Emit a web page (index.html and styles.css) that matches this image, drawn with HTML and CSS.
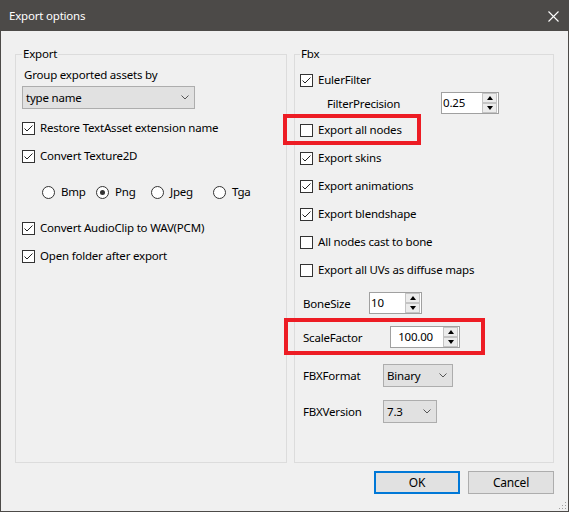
FILE: index.html
```html
<!DOCTYPE html>
<html lang="en">
<head>
  <meta charset="UTF-8" />
  <meta name="viewport" content="width=device-width, initial-scale=1" />
  <title>Export options</title>
  <link rel="stylesheet" href="styles.css">
</head>
<body>
  <div class="window">
    <div class="titlebar">
      <span class="title">Export options</span>
      <svg class="close" width="11" height="11" viewBox="0 0 11 11">
        <path d="M0.5 0.5 L10.5 10.5 M10.5 0.5 L0.5 10.5" stroke="#fff" stroke-width="1.1" fill="none" />
      </svg>
    </div>

    <div class="content">
      <div class="groups">
        <fieldset class="group group-export">
          <legend>Export</legend>
          <div class="caption">Group exported assets by</div>
          <div class="combo combo-group">
            <span>type name</span>
            <svg class="chevron" width="8" height="5" viewBox="0 0 8 5"><path d="M0.5 0.5 L4 4 L7.5 0.5" stroke="#555" fill="none" /></svg>
          </div>
          <div class="check row-first">
            <span class="box checked"><svg width="11" height="11" viewBox="0 0 11 11"><path d="M1.5 5.5 L4 8 L9.5 2.5" stroke="#222" fill="none" /></svg></span>
            <span>Restore TextAsset extension name</span>
          </div>
          <div class="check">
            <span class="box checked"><svg width="11" height="11" viewBox="0 0 11 11"><path d="M1.5 5.5 L4 8 L9.5 2.5" stroke="#222" fill="none" /></svg></span>
            <span>Convert Texture2D</span>
          </div>
          <div class="radios">
            <div class="radio radio-bmp"><span class="dot"></span>Bmp</div>
            <div class="radio radio-png"><span class="dot selected"></span>Png</div>
            <div class="radio radio-jpeg"><span class="dot"></span>Jpeg</div>
            <div class="radio"><span class="dot"></span>Tga</div>
          </div>
          <div class="check row-audio">
            <span class="box checked"><svg width="11" height="11" viewBox="0 0 11 11"><path d="M1.5 5.5 L4 8 L9.5 2.5" stroke="#222" fill="none" /></svg></span>
            <span>Convert AudioClip to WAV(PCM)</span>
          </div>
          <div class="check">
            <span class="box checked"><svg width="11" height="11" viewBox="0 0 11 11"><path d="M1.5 5.5 L4 8 L9.5 2.5" stroke="#222" fill="none" /></svg></span>
            <span>Open folder after export</span>
          </div>
        </fieldset>

        <fieldset class="group group-fbx">
          <legend>Fbx</legend>
          <div class="check row-euler">
            <span class="box checked"><svg width="11" height="11" viewBox="0 0 11 11"><path d="M1.5 5.5 L4 8 L9.5 2.5" stroke="#222" fill="none" /></svg></span>
            <span>EulerFilter</span>
          </div>
          <div class="field field-precision">
            <span class="field-label">FilterPrecision</span>
            <div class="spin-field spin-precision">
              <span class="value">0.25</span>
              <div class="spinner"><span class="up"></span><span class="down"></span></div>
            </div>
          </div>
          <div class="mark mark-nodes">
            <div class="check">
              <span class="box"></span>
              <span>Export all nodes</span>
            </div>
          </div>
          <div class="check row-skins">
            <span class="box checked"><svg width="11" height="11" viewBox="0 0 11 11"><path d="M1.5 5.5 L4 8 L9.5 2.5" stroke="#222" fill="none" /></svg></span>
            <span>Export skins</span>
          </div>
          <div class="check">
            <span class="box checked"><svg width="11" height="11" viewBox="0 0 11 11"><path d="M1.5 5.5 L4 8 L9.5 2.5" stroke="#222" fill="none" /></svg></span>
            <span>Export animations</span>
          </div>
          <div class="check">
            <span class="box checked"><svg width="11" height="11" viewBox="0 0 11 11"><path d="M1.5 5.5 L4 8 L9.5 2.5" stroke="#222" fill="none" /></svg></span>
            <span>Export blendshape</span>
          </div>
          <div class="check">
            <span class="box"></span>
            <span>All nodes cast to bone</span>
          </div>
          <div class="check">
            <span class="box"></span>
            <span>Export all UVs as diffuse maps</span>
          </div>
          <div class="field field-bone">
            <span class="field-label">BoneSize</span>
            <div class="spin-field spin-bone">
              <span class="value">10</span>
              <div class="spinner"><span class="up"></span><span class="down"></span></div>
            </div>
          </div>
          <div class="mark mark-scale">
            <div class="field field-scale">
              <span class="field-label">ScaleFactor</span>
              <div class="spin-field spin-scale">
                <span class="value value-right">100.00</span>
                <div class="spinner"><span class="up"></span><span class="down"></span></div>
              </div>
            </div>
          </div>
          <div class="field field-format">
            <span class="field-label">FBXFormat</span>
            <div class="combo combo-format">
              <span>Binary</span>
              <svg class="chevron" width="8" height="5" viewBox="0 0 8 5"><path d="M0.5 0.5 L4 4 L7.5 0.5" stroke="#555" fill="none" /></svg>
            </div>
          </div>
          <div class="field field-version">
            <span class="field-label">FBXVersion</span>
            <div class="combo combo-version">
              <span>7.3</span>
              <svg class="chevron" width="8" height="5" viewBox="0 0 8 5"><path d="M0.5 0.5 L4 4 L7.5 0.5" stroke="#555" fill="none" /></svg>
            </div>
          </div>
        </fieldset>
      </div>

      <div class="buttons">
        <button class="btn btn-default">OK</button>
        <button class="btn">Cancel</button>
      </div>
    </div>

    <svg class="grip" width="10" height="10" viewBox="0 0 10 10">
      <rect x="8" y="2" width="1" height="1" fill="#a0a0a0" />
      <rect x="5" y="5" width="1" height="1" fill="#a0a0a0" />
      <rect x="8" y="5" width="1" height="1" fill="#a0a0a0" />
      <rect x="2" y="8" width="1" height="1" fill="#a0a0a0" />
      <rect x="5" y="8" width="1" height="1" fill="#a0a0a0" />
      <rect x="8" y="8" width="1" height="1" fill="#a0a0a0" />
    </svg>
  </div>
</body>
</html>
```

FILE: styles.css
```css
body {
  margin: 0;
  font-family: "Noto Sans", "Open Sans", sans-serif;
  font-size: 11.5px;
  letter-spacing: -0.2px;
  color: #000;
  background: #f0f0f0;
}
.window {
  position: relative;
  width: 569px;
  height: 512px;
  box-sizing: border-box;
  border: 1px solid #4c4a48;
  background: #f0f0f0;
  display: flex;
  flex-direction: column;
}
.titlebar {
  height: 30px;
  background: #4c4a48;
  color: #fff;
  display: flex;
  align-items: center;
  justify-content: space-between;
  padding: 0 9px 0 8px;
}
.title {
  line-height: 16px;
}
.content {
  padding: 15px 14px 0 14px;
}
.groups {
  display: flex;
  gap: 7px;
  height: 417px;
}
.group {
  margin: 0;
  padding: 0 0 0 6px;
  border: 1px solid #dcdcdc;
  box-sizing: border-box;
  height: 417px;
  min-width: 0;
}
.group legend {
  padding: 0 1px;
  line-height: 16px;
}
.group-export {
  width: 272px;
}
.group-fbx {
  width: 260px;
  padding-left: 5px;
}

.caption {
  margin: 5px 0 0 2px;
  line-height: 16px;
}

/* checkboxes */
.check {
  display: flex;
  align-items: center;
  height: 16px;
  line-height: 16px;
  margin-top: 12px;
}
.box {
  width: 13px;
  height: 13px;
  box-sizing: border-box;
  border: 1px solid #333;
  background: #fff;
  margin-right: 5px;
  flex: none;
}
.box svg {
  display: block;
}
.row-first {
  margin-top: 11px;
}
.row-audio {
  margin-top: 20px;
}
.row-euler {
  margin-top: 10px;
}
.row-skins {
  margin-top: 5px;
}

/* radio buttons */
.radios {
  display: flex;
  height: 16px;
  margin: 20px 0 0 20px;
}
.radio {
  display: flex;
  align-items: center;
  line-height: 16px;
}
.radio-bmp { width: 54px; }
.radio-png { width: 55px; }
.radio-jpeg { width: 62px; }
.dot {
  width: 13px;
  height: 13px;
  box-sizing: border-box;
  border: 1px solid #333;
  border-radius: 50%;
  background: #fff;
  margin-right: 6px;
  display: flex;
  align-items: center;
  justify-content: center;
}
.dot.selected::after {
  content: "";
  width: 5px;
  height: 5px;
  border-radius: 50%;
  background: #333;
}

/* drop-down boxes */
.combo {
  display: flex;
  align-items: center;
  justify-content: space-between;
  box-sizing: border-box;
  height: 23px;
  border: 1px solid #adadad;
  background: #e1e1e1;
  padding: 0 5px 0 3px;
}
.combo-group {
  width: 173px;
  margin-top: 3px;
}
.combo-format {
  width: 70px;
}
.combo-version {
  width: 54px;
}

/* label + control rows */
.field {
  display: flex;
  align-items: center;
  height: 22px;
}
.field-label {
  flex: none;
  box-sizing: border-box;
  padding-left: 3px;
}
.field-precision {
  margin-top: 4px;
}
.field-precision .field-label {
  width: 141px;
  padding-left: 27px;
}
.field-bone {
  margin-top: 14px;
}
.field-bone .field-label {
  width: 69px;
}
.field-scale .field-label {
  width: 90px;
}
.field-format {
  height: 23px;
  margin-top: 9px;
}
.field-version {
  height: 23px;
  margin-top: 13px;
}
.field-format .field-label,
.field-version .field-label {
  width: 83px;
}

/* numeric up-down */
.spin-field {
  display: flex;
  box-sizing: border-box;
  height: 22px;
  border: 1px solid #a0a0a0;
  background: #fff;
}
.spin-precision { width: 58px; }
.spin-bone { width: 53px; }
.spin-scale { width: 70px; }
.value {
  flex: 1;
  line-height: 20px;
  padding-left: 1px;
}
.value-right {
  text-align: right;
  padding-right: 10px;
}
.spinner {
  width: 15px;
  margin: 0 1px 0 0;
  display: flex;
  flex-direction: column;
}
.spinner span {
  flex: 1;
  display: flex;
  align-items: center;
  justify-content: center;
  background: #ececec;
  border: 1px solid #c4c4c4;
}
.spinner .up::after {
  content: "";
  border-left: 3px solid transparent;
  border-right: 3px solid transparent;
  border-bottom: 4px solid #000;
}
.spinner .down::after {
  content: "";
  border-left: 3px solid transparent;
  border-right: 3px solid transparent;
  border-top: 4px solid #000;
}

/* red highlight frames */
.mark {
  box-sizing: border-box;
  border: 4px solid #ed1c24;
}
.mark .check {
  margin-top: 0;
}
.mark-nodes {
  width: 138px;
  margin-left: -17px;
  padding: 4px 0 3px 13px;
}
.mark-scale {
  width: 201px;
  margin: 4px 0 0 -16px;
  padding: 4px 0 3px 12px;
}

/* dialog buttons */
.buttons {
  display: flex;
  justify-content: flex-end;
  gap: 8px;
  margin-top: 8px;
}
.btn {
  width: 86px;
  height: 23px;
  box-sizing: border-box;
  border: 1px solid #adadad;
  background: #e1e1e1;
  font-family: inherit;
  font-size: 12px;
  letter-spacing: -0.2px;
  color: #000;
  padding: 0;
}
.btn-default {
  border: 2px solid #0078d7;
}

.grip {
  position: absolute;
  right: 1px;
  bottom: 1px;
}
```
